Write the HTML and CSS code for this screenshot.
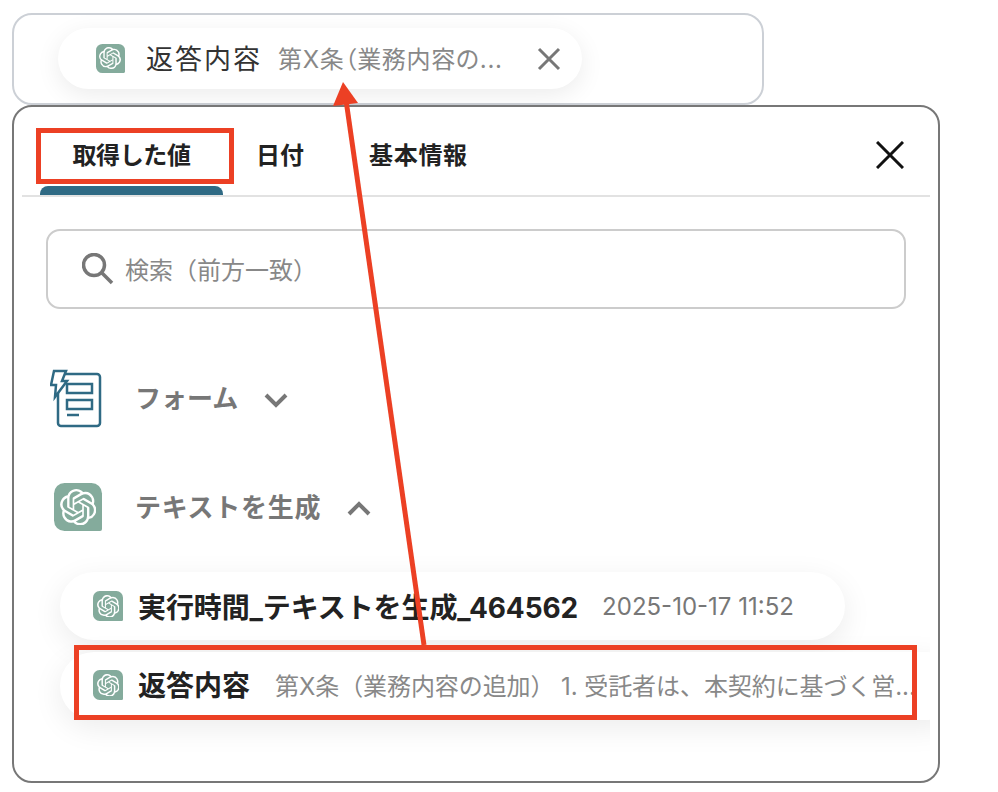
FILE: index.html
```html
<!DOCTYPE html>
<html lang="ja">
<head>
<meta charset="utf-8">
<title>返答内容</title>
<link rel="stylesheet" href="styles.css">
</head>
<body>
<svg width="0" height="0" class="defs" aria-hidden="true">
  <symbol id="gpt" viewBox="0 0 24 24">
    <path d="M22.2819 9.8211a5.9847 5.9847 0 0 0-.5157-4.9108 6.0462 6.0462 0 0 0-6.5098-2.9A6.0651 6.0651 0 0 0 4.9807 4.1818a5.9847 5.9847 0 0 0-3.9977 2.9 6.0462 6.0462 0 0 0 .7427 7.0966 5.98 5.98 0 0 0 .511 4.9107 6.051 6.051 0 0 0 6.5146 2.9001A5.9847 5.9847 0 0 0 13.2599 24a6.0557 6.0557 0 0 0 5.7718-4.2058 5.9894 5.9894 0 0 0 3.9977-2.9001 6.0557 6.0557 0 0 0-.7475-7.0729zm-9.022 12.6081a4.4755 4.4755 0 0 1-2.8764-1.0408l.1419-.0804 4.7783-2.7582a.7948.7948 0 0 0 .3927-.6813v-6.7369l2.02 1.1686a.071.071 0 0 1 .038.052v5.5826a4.504 4.504 0 0 1-4.4945 4.4944zm-9.6607-4.1254a4.4708 4.4708 0 0 1-.5346-3.0137l.142.0852 4.783 2.7582a.7712.7712 0 0 0 .7806 0l5.8428-3.3685v2.3324a.0804.0804 0 0 1-.0332.0615L9.74 19.9502a4.4992 4.4992 0 0 1-6.1408-1.6464zM2.3408 7.8956a4.485 4.485 0 0 1 2.3655-1.9728V11.6a.7664.7664 0 0 0 .3879.6765l5.8144 3.3543-2.0201 1.1685a.0757.0757 0 0 1-.071 0l-4.8303-2.7865A4.504 4.504 0 0 1 2.3408 7.872zm16.5963 3.8558L13.1038 8.364 15.1192 7.2a.0757.0757 0 0 1 .071 0l4.8303 2.7913a4.4944 4.4944 0 0 1-.6765 8.1042v-5.6772a.79.79 0 0 0-.407-.667zm2.0107-3.0231l-.142-.0852-4.7735-2.7818a.7759.7759 0 0 0-.7854 0L9.409 9.2297V6.8974a.0662.0662 0 0 1 .0284-.0615l4.8303-2.7866a4.4992 4.4992 0 0 1 6.6802 4.66zM8.3065 12.863l-2.02-1.1638a.0804.0804 0 0 1-.038-.0567V6.0742a4.4992 4.4992 0 0 1 7.3757-3.4537l-.142.0805L8.704 5.459a.7948.7948 0 0 0-.3927.6813zm1.0976-2.3654l2.602-1.4998 2.6069 1.4998v2.9994l-2.5974 1.4997-2.6067-1.4997Z"/>
  </symbol>
</svg>

<main class="page">
  <section class="field">
    <div class="chip">
      <span class="gpt gpt-small"><svg><use href="#gpt"/></svg></span>
      <span class="chip-name">返答内容</span>
      <span class="chip-value">第X条（業務内容の...</span>
      <svg class="chip-close" viewBox="0 0 24 24"><path d="M2 2 22 22M22 2 2 22"/></svg>
    </div>
  </section>

  <section class="panel">
    <nav class="tabs">
      <div class="tab tab-active">取得した値</div>
      <div class="tab tab-date">日付</div>
      <div class="tab tab-basic">基本情報</div>
      <svg class="panel-close" viewBox="0 0 28 28"><path d="M1 1 27 27M27 1 1 27"/></svg>
    </nav>

    <div class="search">
      <svg class="search-icon" viewBox="0 0 32 32"><circle cx="12" cy="12" r="10.500"/><path d="M19.500 19.500 30 30"/></svg>
      <span class="search-text">検索（前方一致）</span>
    </div>

    <div class="group group-form">
      <svg class="form-icon" viewBox="0 0 52 60">
        <rect x="8" y="6" width="42" height="52" rx="3"/>
        <rect x="17" y="16" width="25" height="9"/>
        <rect x="17" y="32" width="25" height="9"/>
        <path d="M17 47H29"/>
        <path class="bolt" d="M4 3H16L12 13H17L5 29 6 17H1Z"/>
      </svg>
      <span class="group-name">フォーム</span>
      <svg class="chevron" viewBox="0 0 24 16"><path d="M2 3 12 13 22 3"/></svg>
    </div>

    <div class="group group-gpt">
      <span class="gpt gpt-large"><svg><use href="#gpt"/></svg></span>
      <span class="group-name">テキストを生成</span>
      <svg class="chevron" viewBox="0 0 24 16"><path d="M2 13 12 3 22 13"/></svg>
    </div>

    <div class="results">
      <div class="result result-time">
        <span class="gpt gpt-row"><svg><use href="#gpt"/></svg></span>
        <span class="result-name">実行時間_テキストを生成_464562</span>
        <span class="result-value">2025-10-17 11:52</span>
      </div>
      <div class="result result-answer">
        <span class="gpt gpt-row"><svg><use href="#gpt"/></svg></span>
        <span class="result-name">返答内容</span>
        <span class="result-value">第X条（業務内容の追加） 1. 受託者は、本契約に基づく営...</span>
      </div>
    </div>
  </section>

  <div class="mark mark-tab"></div>
  <div class="mark mark-row"></div>
  <svg class="arrow" viewBox="0 0 998 792">
    <path class="arrow-line" d="M424 645 346 100"/>
    <path class="arrow-head" d="M343 82 358 103 333 106Z"/>
  </svg>
</main>
</body>
</html>
```

FILE: styles.css
```css
* {
  box-sizing: border-box;
}

html,
body {
  margin: 0;
  background: #fff;
}

body {
  font-family: Inter, "Noto Sans CJK JP", sans-serif;
  color: #222;
}

.defs {
  position: absolute;
}

.page {
  position: relative;
  width: 998px;
  height: 792px;
  overflow: hidden;
  padding: 13px 0 0 12px;
}

/* top field */
.field {
  width: 752px;
  height: 92px;
  border: 2px solid #ccd0d6;
  border-radius: 20px;
  padding: 13px 0 0 44px;
}

.chip {
  display: flex;
  align-items: center;
  width: 524px;
  height: 61px;
  border-radius: 31px;
  background: #fff;
  box-shadow: 0 6px 24px rgba(0, 0, 0, 0.08);
  padding-left: 38px;
}

.chip-name {
  margin-left: 21px;
  width: 132px;
  padding-bottom: 2px;
  font-size: 27px;
  letter-spacing: 2px;
  color: #333;
  white-space: nowrap;
}

.chip-value {
  width: 225px;
  padding-bottom: 2px;
  font-size: 24px;
  letter-spacing: 0.700px;
  color: #888;
  white-space: nowrap;
  font-feature-settings: "palt";
}

.chip-close {
  width: 24px;
  height: 24px;
  margin-left: 34px;
  fill: none;
  stroke: #777;
  stroke-width: 3;
}

/* OpenAI tile */
.gpt {
  display: flex;
  align-items: center;
  justify-content: center;
  flex: none;
  background: #84ab9c;
  fill: #fff;
  border-radius: 22% 22% 4% 22%;
}

.gpt svg {
  width: 76%;
  height: 76%;
}

.gpt-small {
  width: 29px;
  height: 29px;
}

.gpt-row {
  width: 30px;
  height: 30px;
}

.gpt-large {
  width: 48px;
  height: 48px;
}

/* panel */
.panel {
  width: 928px;
  height: 678px;
  border: 2px solid #777;
  border-radius: 20px;
  background: #fff;
  padding: 0 8px;
}

.tabs {
  display: flex;
  height: 90px;
  border-bottom: 2px solid #e2e2e2;
  padding-left: 18px;
  padding-right: 26px;
}

.tab {
  padding-top: 29px;
  height: 88px;
  font-size: 24px;
  line-height: 40px;
  font-weight: 700;
  color: #222;
  white-space: nowrap;
}

.tab-active {
  position: relative;
  width: 183px;
  text-align: center;
  letter-spacing: -0.400px;
}

.tab-active::after {
  content: "";
  position: absolute;
  left: 0;
  right: 0;
  bottom: 0;
  height: 9px;
  border-radius: 8px 8px 0 0;
  background: #2f6a84;
}

.tab-date {
  margin-left: 33px;
}

.tab-basic {
  margin-left: 65px;
  letter-spacing: 0.700px;
}

.panel-close {
  width: 28px;
  height: 28px;
  margin: 34px 0 0 auto;
  fill: none;
  stroke: #111;
  stroke-width: 3;
}

/* search */
.search {
  display: flex;
  align-items: center;
  height: 80px;
  margin: 32px 24px 0;
  border: 2px solid #ccc;
  border-radius: 14px;
  padding-left: 34px;
}

.search-icon {
  width: 32px;
  height: 32px;
  fill: none;
  stroke: #777;
  stroke-width: 3.500;
}

.search-text {
  margin-left: 11px;
  padding-bottom: 2px;
  font-size: 24px;
  color: #888;
  white-space: nowrap;
}

/* groups */
.group {
  display: flex;
  align-items: center;
}

.group-form {
  margin-top: 59px;
  padding-left: 28px;
  height: 60px;
}

.group-gpt {
  margin-top: 55px;
  padding-left: 32px;
  height: 48px;
}

.form-icon {
  width: 52px;
  height: 60px;
  flex: none;
  fill: none;
  stroke: #2f6a84;
  stroke-width: 2.500;
}

.bolt {
  fill: #fff;
}

.group-name {
  margin-left: 33px;
  padding-bottom: 3px;
  font-size: 26px;
  font-weight: 700;
  color: #777;
  white-space: nowrap;
}

.group-gpt .group-name {
  letter-spacing: 0.700px;
}

.chevron {
  width: 24px;
  height: 16px;
  margin-left: 26px;
  margin-top: 3px;
  fill: none;
  stroke: #777;
  stroke-width: 4;
}

/* results */
.results {
  height: 217px;
  margin-top: 11px;
  padding: 30px 0 0 38px;
  overflow: hidden;
}

.result {
  display: flex;
  align-items: center;
  height: 68px;
  border-radius: 35px;
  background: #fff;
  box-shadow: 0 8px 30px rgba(0, 0, 0, 0.08);
  padding-left: 33px;
}

.result-time {
  width: 785px;
}

.result-answer {
  width: 900px;
  margin-top: 12px;
  padding-right: 44px;
  padding-bottom: 2px;
}

.result-name {
  flex: none;
  margin-left: 15px;
  padding-bottom: 2px;
  font-size: 28px;
  font-weight: 700;
  color: #222;
  white-space: nowrap;
}

.result-time .result-name {
  padding-bottom: 0;
  letter-spacing: -0.100px;
}

.result-value {
  margin-left: 24px;
  padding-bottom: 2px;
  font-size: 24px;
  color: #888;
  white-space: nowrap;
}

.result-answer .result-value {
  margin-left: 25px;
  letter-spacing: -0.080px;
}

.result-time .result-value {
  padding-bottom: 0;
  color: #777;
}

/* annotations */
.mark {
  position: absolute;
  border: 5px solid #ec4024;
}

.mark-tab {
  left: 36px;
  top: 128px;
  width: 198px;
  height: 56px;
}

.mark-row {
  left: 74px;
  top: 645px;
  width: 843px;
  height: 75px;
}

.arrow {
  position: absolute;
  left: 0;
  top: 0;
  width: 998px;
  height: 792px;
}

.arrow-line {
  fill: none;
  stroke: #ec4024;
  stroke-width: 5;
}

.arrow-head {
  fill: #ec4024;
}
```
